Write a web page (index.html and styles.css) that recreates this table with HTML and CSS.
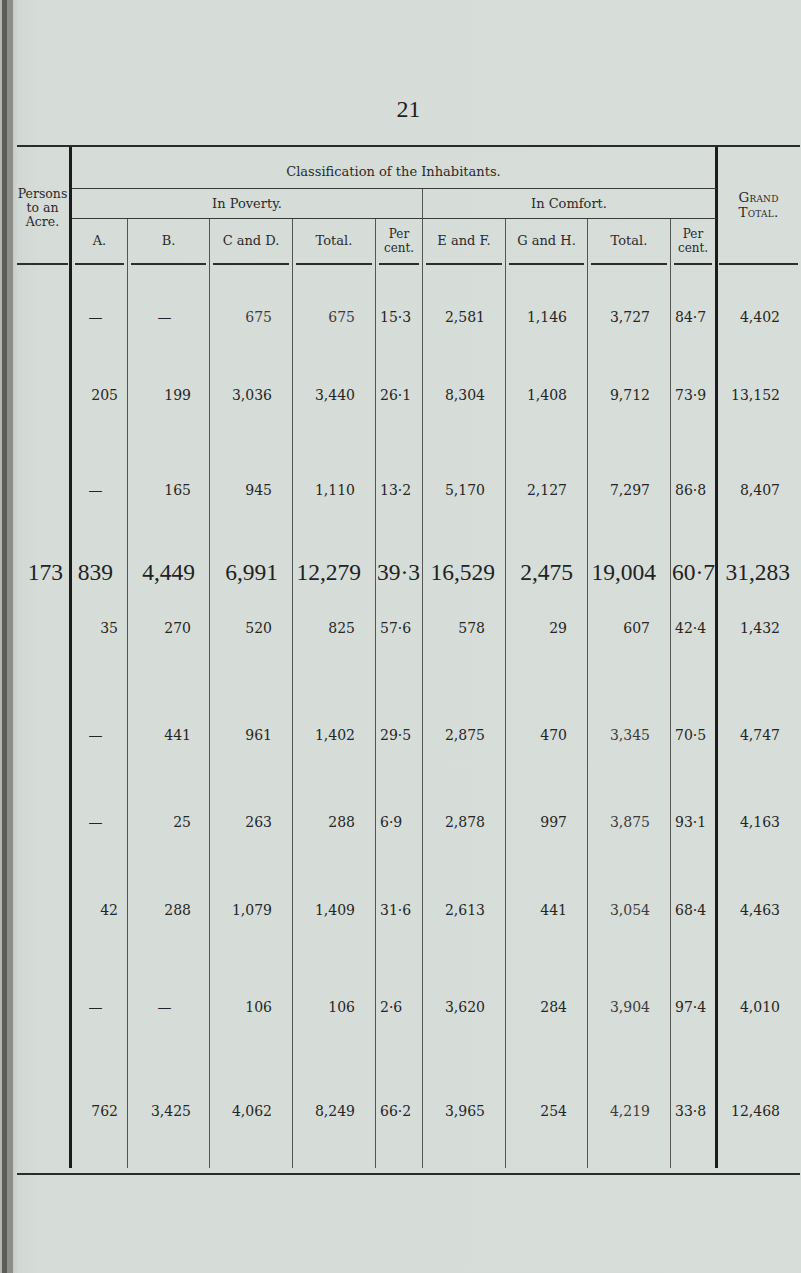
FILE: index.html
```html
<!DOCTYPE html>
<html lang="en">
<head>
<meta charset="utf-8">
<title>Classification of the Inhabitants</title>
<link rel="stylesheet" href="styles.css">
</head>
<body>
<div class="page">
  <div class="folio">21</div>
  <div class="tbl">
    <div class="h persons"><div class="lbl">Persons<br>to an<br>Acre.</div></div>
    <div class="h classif">Classification of the Inhabitants.</div>
    <div class="h grand"><div class="lbl"><span class="sc">Grand<br>Total.</span></div></div>
    <div class="h poverty">In Poverty.</div>
    <div class="h comfort">In Comfort.</div>
    <div class="h col"><div class="lbl">A.</div></div>
    <div class="h col"><div class="lbl">B.</div></div>
    <div class="h col"><div class="lbl">C and D.</div></div>
    <div class="h col"><div class="lbl">Total.</div></div>
    <div class="h col"><div class="lbl small">Per<br>cent.</div></div>
    <div class="h col"><div class="lbl">E and F.</div></div>
    <div class="h col"><div class="lbl">G and H.</div></div>
    <div class="h col"><div class="lbl">Total.</div></div>
    <div class="h col thick"><div class="lbl small">Per<br>cent.</div></div>

    <!-- row 1 -->
    <div class="c p r1"></div>
    <div class="c a d r1">—</div>
    <div class="c b d r1">—</div>
    <div class="c n r1 lt">675</div>
    <div class="c n r1 lt">675</div>
    <div class="c pc r1">15·3</div>
    <div class="c n r1">2,581</div>
    <div class="c n r1">1,146</div>
    <div class="c n r1">3,727</div>
    <div class="c pc thick r1">84·7</div>
    <div class="c g r1">4,402</div>

    <!-- row 2 -->
    <div class="c p"></div>
    <div class="c a">205</div>
    <div class="c b">199</div>
    <div class="c n">3,036</div>
    <div class="c n">3,440</div>
    <div class="c pc">26·1</div>
    <div class="c n">8,304</div>
    <div class="c n">1,408</div>
    <div class="c n">9,712</div>
    <div class="c pc thick">73·9</div>
    <div class="c g">13,152</div>

    <!-- row 3 -->
    <div class="c p"></div>
    <div class="c a d">—</div>
    <div class="c b">165</div>
    <div class="c n">945</div>
    <div class="c n">1,110</div>
    <div class="c pc">13·2</div>
    <div class="c n">5,170</div>
    <div class="c n">2,127</div>
    <div class="c n">7,297</div>
    <div class="c pc thick">86·8</div>
    <div class="c g">8,407</div>

    <!-- row 4 (totals) -->
    <div class="c p big">173</div>
    <div class="c a big">839</div>
    <div class="c b big">4,449</div>
    <div class="c n big">6,991</div>
    <div class="c n big">12,279</div>
    <div class="c pc big">39·3</div>
    <div class="c n big wide">16,529</div>
    <div class="c n big">2,475</div>
    <div class="c n big">19,004</div>
    <div class="c pc thick big">60·7</div>
    <div class="c g big wide">31,283</div>

    <!-- row 5 -->
    <div class="c p"></div>
    <div class="c a">35</div>
    <div class="c b">270</div>
    <div class="c n">520</div>
    <div class="c n">825</div>
    <div class="c pc">57·6</div>
    <div class="c n">578</div>
    <div class="c n">29</div>
    <div class="c n">607</div>
    <div class="c pc thick">42·4</div>
    <div class="c g">1,432</div>

    <!-- row 6 -->
    <div class="c p"></div>
    <div class="c a d">—</div>
    <div class="c b">441</div>
    <div class="c n">961</div>
    <div class="c n">1,402</div>
    <div class="c pc">29·5</div>
    <div class="c n">2,875</div>
    <div class="c n">470</div>
    <div class="c n lt">3,345</div>
    <div class="c pc thick">70·5</div>
    <div class="c g">4,747</div>

    <!-- row 7 -->
    <div class="c p"></div>
    <div class="c a d">—</div>
    <div class="c b">25</div>
    <div class="c n">263</div>
    <div class="c n">288</div>
    <div class="c pc">6·9</div>
    <div class="c n">2,878</div>
    <div class="c n">997</div>
    <div class="c n lt">3,875</div>
    <div class="c pc thick">93·1</div>
    <div class="c g">4,163</div>

    <!-- row 8 -->
    <div class="c p"></div>
    <div class="c a">42</div>
    <div class="c b">288</div>
    <div class="c n">1,079</div>
    <div class="c n">1,409</div>
    <div class="c pc">31·6</div>
    <div class="c n">2,613</div>
    <div class="c n">441</div>
    <div class="c n lt">3,054</div>
    <div class="c pc thick">68·4</div>
    <div class="c g">4,463</div>

    <!-- row 9 -->
    <div class="c p"></div>
    <div class="c a d">—</div>
    <div class="c b d">—</div>
    <div class="c n">106</div>
    <div class="c n">106</div>
    <div class="c pc">2·6</div>
    <div class="c n">3,620</div>
    <div class="c n">284</div>
    <div class="c n lt">3,904</div>
    <div class="c pc thick">97·4</div>
    <div class="c g">4,010</div>

    <!-- row 10 -->
    <div class="c p"></div>
    <div class="c a">762</div>
    <div class="c b">3,425</div>
    <div class="c n">4,062</div>
    <div class="c n">8,249</div>
    <div class="c pc">66·2</div>
    <div class="c n">3,965</div>
    <div class="c n">254</div>
    <div class="c n lt">4,219</div>
    <div class="c pc thick">33·8</div>
    <div class="c g">12,468</div>
  </div>
  <div class="foot-rule"></div>
</div>
</body>
</html>
```

FILE: styles.css
```css
html, body {
  margin: 0;
  padding: 0;
}

body {
  min-height: 1273px;
  color: #262626;
  font-family: "DejaVu Serif", "Liberation Serif", serif;
  background:
    linear-gradient(to right,
      #b4b7b1 0px, #b4b7b1 2px,
      #5b5c57 2px, #5b5c57 7px,
      #8c8e89 7px, #8c8e89 13px,
      #c6ccc8 13px, #d1d7d3 18px,
      #d6dcd8 40px, #d7ddd9 100%);
}

.page {
  padding: 94px 1px 0 17px;
}

.folio {
  font-family: "Liberation Serif", serif;
  font-size: 24px;
  line-height: 30px;
  text-align: center;
  color: #1e1e1e;
  margin-bottom: 21px;
}

.tbl {
  display: grid;
  width: 783px;
  grid-template-columns: 55px 56px 82px 83px 83px 47px 83px 82px 83px 47px 82px;
  grid-template-rows: 42px 30px 46px 120px 95px 78px 60px 107px 87px 88px 97px 104px 67px;
  border-top: 2px solid #2b2b2b;
}

/* header */
.h {
  display: flex;
  font-size: 13px;
  line-height: 16px;
  color: #2a2a2a;
}

.h .lbl {
  flex: 1;
  display: flex;
  align-items: center;
  justify-content: center;
  text-align: center;
  border-bottom: 2px solid #2e2e2e;
}

.persons {
  grid-column: 1;
  grid-row: 1 / 4;
  border-right: 3px solid #1c1c1c;
  padding-right: 1px;
  font-size: 12.5px;
}

.persons .lbl {
  line-height: 14px;
  padding-top: 6px;
}

.grand {
  grid-column: 11;
  grid-row: 1 / 4;
  padding: 0 2px 0 1px;
}

.grand .lbl {
  line-height: 15px;
}

.sc {
  font-variant: small-caps;
  font-size: 13.5px;
  letter-spacing: 0.2px;
}

.classif {
  grid-column: 2 / 11;
  grid-row: 1;
  border-right: 3px solid #1c1c1c;
  border-bottom: 1px solid #3a3a3a;
  align-items: center;
  justify-content: center;
  padding-top: 9px;
}

.poverty {
  grid-column: 2 / 7;
  grid-row: 2;
  border-right: 1px solid #555;
  border-bottom: 1px solid #3a3a3a;
  align-items: center;
  justify-content: center;
}

.comfort {
  grid-column: 7 / 11;
  grid-row: 2;
  border-right: 3px solid #1c1c1c;
  border-bottom: 1px solid #3a3a3a;
  align-items: center;
  justify-content: center;
}

.col {
  grid-row: 3;
  padding: 0 3px;
  border-right: 1px solid #555;
}

.col.thick {
  border-right: 3px solid #1c1c1c;
}

.h .small {
  font-size: 12px;
  line-height: 14px;
}

/* data cells */
.c {
  font-size: 14px;
  line-height: 20px;
  text-align: right;
  padding-right: 20px;
  border-right: 1px solid #555;
  color: #252525;
  white-space: nowrap;
}

.c.p {
  border-right: 3px solid #1c1c1c;
  padding-right: 6px;
}

.c.a {
  padding-right: 9px;
}

.c.b {
  padding-right: 18px;
}

.c.n {
  padding-right: 20px;
}

.c.pc {
  text-align: left;
  padding-left: 4px;
  padding-right: 0;
}

.c.thick {
  border-right: 3px solid #1c1c1c;
}

.c.g {
  border-right: 0;
  padding-right: 20px;
}

.c.d {
  text-align: center;
  padding-right: 8px;
}

.c.r1 {
  padding-top: 42px;
}

.c.lt {
  color: #3c3c3c;
}

.c.big {
  font-family: "Liberation Serif", serif;
  font-size: 23.5px;
  line-height: 28px;
  padding-right: 14px;
  color: #222;
}

.c.big.p {
  padding-right: 6px;
}

.c.big.pc {
  padding-left: 1px;
  padding-right: 0;
}

.c.big.wide {
  padding-right: 10px;
}

.foot-rule {
  width: 783px;
  margin-top: 5px;
  border-top: 2px solid #2b2b2b;
}
```
